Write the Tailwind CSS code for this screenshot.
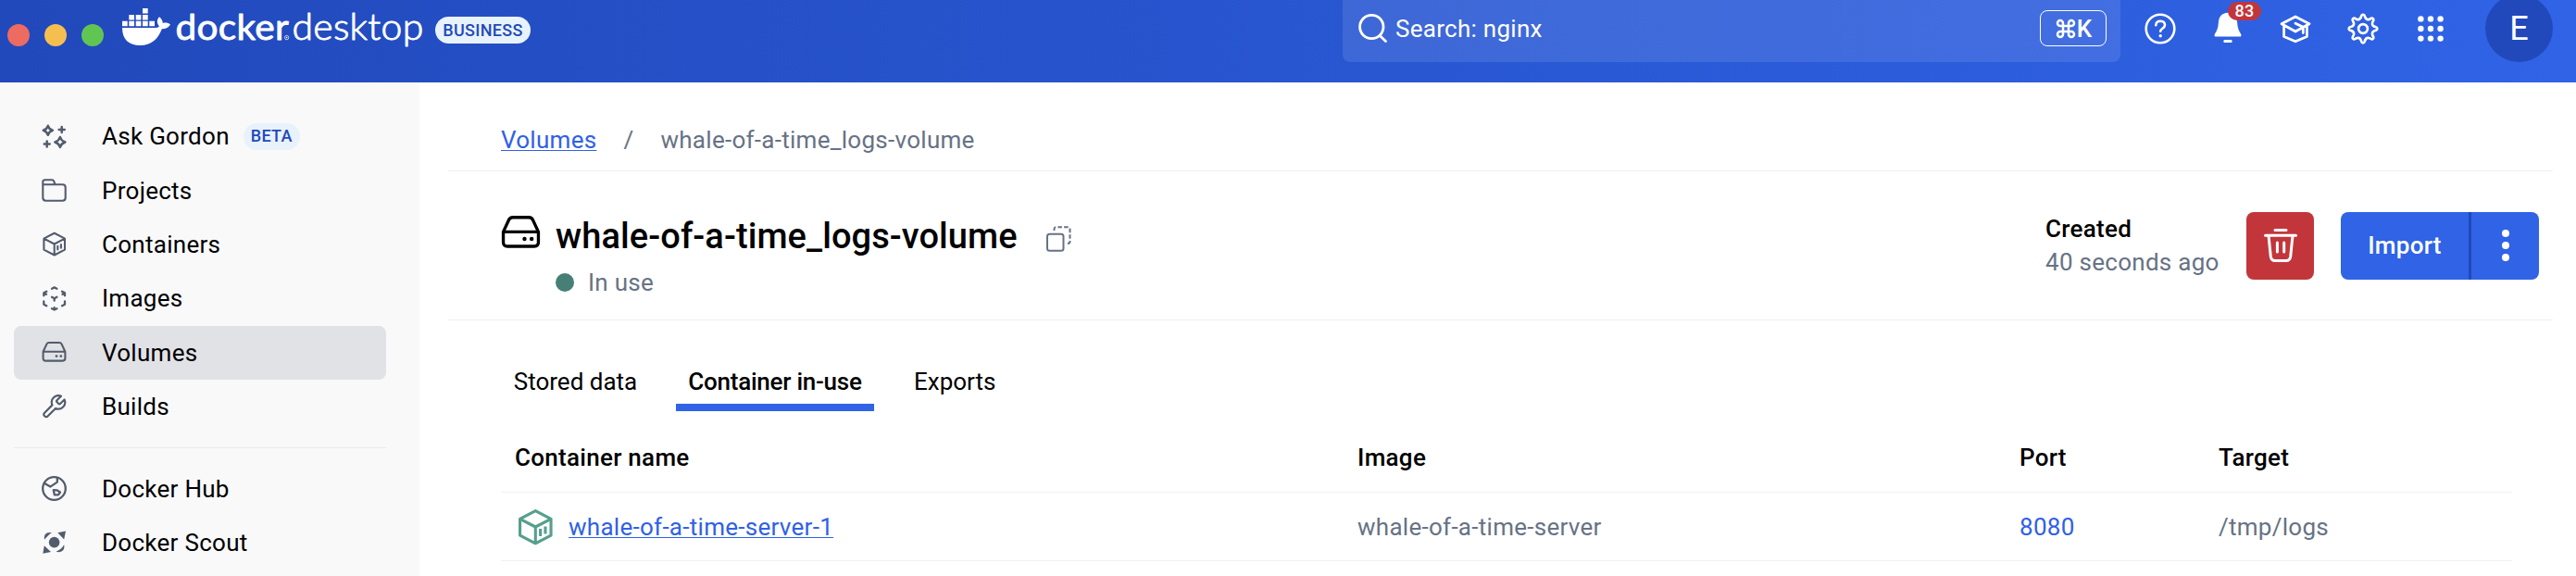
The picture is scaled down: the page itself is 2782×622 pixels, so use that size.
<!DOCTYPE html>
<html lang="en">
<head>
<meta charset="utf-8">
<title>Docker Desktop</title>
<script src="https://cdn.jsdelivr.net/npm/@tailwindcss/browser@4"></script>
</head>
<body class="w-[2782px] h-[622px] overflow-hidden bg-white font-['Roboto',sans-serif] text-[26px] leading-none tracking-[0.28px] text-black">
<svg class="hidden">
  <symbol id="volume" viewBox="0 0 27 27"><g fill="none" stroke="currentColor" stroke-width="2.1" stroke-linejoin="round"><path d="M1.6 12.8 5.4 4.6Q6.1 3 8 3H19Q20.900 3 21.600 4.600L25.400 12.800V19.800Q25.400 22.600 22.600 22.600H4.400Q1.600 22.600 1.600 19.800ZM1.600 12.800H25.400"/></g><circle cx="16" cy="17.600" r="1.400" fill="currentColor"/><circle cx="20.800" cy="17.600" r="1.400" fill="currentColor"/></symbol>
  <symbol id="cube" viewBox="0 0 27 27"><path d="M13.700 1.700 25 7.600V19.600L13.700 25.500 2.400 19.600V7.600ZM2.400 7.600 13.700 13.500 25 7.600M13.700 13.500V25.500M17.300 14.900V20.300M20.900 13.200V18.600" fill="none" stroke="currentColor" stroke-width="2.1" stroke-linejoin="round"/></symbol>
  <path id="tooth" d="M-2.200 -12.400C-1.600 -16.300 1.600 -16.300 2.200 -12.400Q3.670 -8.870 7.210 -10.320"/>
</svg>

<header class="h-[89px] bg-linear-to-r from-[#2149bb] to-[#3063e6]">
  <div class="flex h-[61px] items-center pl-2 text-white">
    <div class="mt-[15px] flex gap-4">
      <span class="size-6 rounded-full bg-[#ed6b60]"></span>
      <span class="size-6 rounded-full bg-[#f5bf4f]"></span>
      <span class="size-6 rounded-full bg-[#61c554]"></span>
    </div>
    <svg class="ml-4 h-[61px] w-[332px] shrink-0" viewBox="128 0 332 61" fill="#fff">
      <path d="M154 9h5.700v5.500H154zM139.300 16h5.700v5.500h-5.700zM146.700 16h5.700v5.500h-5.700zM154 16h5.700v5.500H154zM132 22.700h5.700v5.500H132zM139.300 22.700h5.700v5.500h-5.700zM146.700 22.700h5.700v5.500h-5.700zM154 22.700h5.700v5.500H154zM161.300 22.700h5.700v5.500h-5.700z"/>
      <path d="M132 30H167.500Q170.500 30 172 28.500C168.800 24.500 169.500 21 172 18.300C174.600 20.300 175.700 22.600 175.800 25C178.500 24.200 181.500 24.600 184 26.300C182.400 29.800 179.300 31.200 174.800 31.200C171 42 163 49 151.500 49C139 49 132 42.500 132 30Z"/>
      <text x="189.500" y="43.200" font-family="Lato" font-weight="400" font-size="38.500" stroke="#fff" stroke-width=".8" stroke-linejoin="round" textLength="122.500" lengthAdjust="spacingAndGlyphs">docker</text>
      <circle cx="309.600" cy="40.600" r="2.200" fill="none" stroke="#fff" stroke-width=".7"/><circle cx="309.600" cy="40.600" r=".8"/>
      <text x="315.500" y="43.200" font-family="Lato" font-weight="300" font-size="38.500" stroke="#fff" stroke-width=".9" stroke-linejoin="round" textLength="142" lengthAdjust="spacingAndGlyphs">desktop</text>
    </svg>
    <span class="ml-[10px] mt-1 flex h-[29px] w-[103px] items-center justify-center rounded-full bg-[#e8f2fb] text-[18px] font-medium tracking-[0.3px] text-[#2149bb]">BUSINESS</span>
    <div class="ml-[877px] flex h-[73px] w-[840px] items-center rounded-lg bg-white/10 pl-[15px] pr-[15px]">
      <svg class="size-9" viewBox="0 0 36 36" fill="none" stroke="#fff" stroke-width="2.800" stroke-linecap="round"><circle cx="16.300" cy="16" r="12.700"/><path d="M25.200 25.500 31.500 31.500"/></svg>
      <span class="ml-[6px] grow">Search: nginx</span>
      <span class="flex h-[39px] w-[72px] items-center justify-center rounded-lg border-[1.500px] border-white font-medium"><svg class="size-6" viewBox="0 0 24 24" fill="none" stroke="#fff" stroke-width="2.500"><path d="M15 6v12a3 3 0 1 0 3-3H6a3 3 0 1 0 3 3V6a3 3 0 1 0-3 3h12a3 3 0 1 0-3-3"/></svg>K</span>
    </div>
    <div class="ml-[6px] flex">
      <span class="flex w-[73px] justify-center"><svg class="size-9" viewBox="0 0 36 36" fill="none" stroke="#fff" stroke-width="2.600" stroke-linecap="round"><circle cx="18" cy="18" r="15.300"/><path d="M13.300 14.200Q13.500 9.800 18.200 9.800Q23 10 23 14.300C23 17.500 18.200 18 18.200 20.700"/><circle cx="18.200" cy="25.800" r="1.700" fill="#fff" stroke="none"/></svg></span>
      <span class="relative flex w-[73px] justify-center"><svg class="size-9" viewBox="0 0 36 36" fill="#fff"><path d="M18 .8C11.500 1 8.300 5.500 7.900 11Q7.500 18.500 4.300 23Q2.500 26.500 4.800 26.500H31.200Q33.500 26.500 31.700 23Q28.500 18.500 28.100 11C27.700 5.500 24.500 1 18 .8ZM14.500 30H21.500Q22.700 30 22.700 31.500T21.500 33H14.500Q13.300 33 13.300 31.500T14.500 30Z"/></svg><span class="absolute left-[37px] top-[-11px] flex h-[20px] w-[36px] items-center justify-center rounded-full bg-[#c2363b] text-[18px] font-medium">83</span></span>
      <span class="flex w-[73px] justify-center"><svg class="size-9" viewBox="0 0 36 36" fill="none" stroke="#fff" stroke-width="2.800" stroke-linejoin="round" stroke-linecap="round"><path d="M18 5 33 12.700 18 21 3 12.700ZM5.600 15V26.500L18 31.800 30.400 26.500V15M18 12.300 26.300 16.300V22.500"/></svg></span>
      <span class="flex w-[73px] justify-center"><svg class="size-9" viewBox="-18 -18 36 36" fill="none" stroke="#fff" stroke-width="2.600" stroke-linecap="round" stroke-linejoin="round"><use href="#tooth"/><use href="#tooth" transform="rotate(45)"/><use href="#tooth" transform="rotate(90)"/><use href="#tooth" transform="rotate(135)"/><use href="#tooth" transform="rotate(180)"/><use href="#tooth" transform="rotate(225)"/><use href="#tooth" transform="rotate(270)"/><use href="#tooth" transform="rotate(315)"/><circle r="4.900"/></svg></span>
      <span class="flex w-[73px] justify-center"><svg class="size-9" viewBox="-18 -18 36 36" fill="#fff"><circle cx="-10.600" cy="-10.600" r="3.200"/><circle cy="-10.600" r="3.200"/><circle cx="10.600" cy="-10.600" r="3.200"/><circle cx="-10.600" r="3.200"/><circle r="3.200"/><circle cx="10.600" r="3.200"/><circle cx="-10.600" cy="10.600" r="3.200"/><circle cy="10.600" r="3.200"/><circle cx="10.600" cy="10.600" r="3.200"/></svg></span>
    </div>
    <span class="ml-[23px] flex size-[73px] shrink-0 items-center justify-center rounded-full bg-[#2149bb] text-[36px] tracking-normal">E</span>
  </div>
</header>

<div class="flex h-[533px]">
  <aside class="w-[453px] shrink-0 bg-[#f9f9fa] pl-[15px] pr-9 pt-[29px]">
    <nav class="[&_a]:flex [&_a]:h-[58.400px] [&_a]:items-center [&_a]:gap-[38px] [&_a]:rounded-lg [&_a]:pl-[30px] [&_svg]:size-[27px] [&_svg]:text-[#525c6c]">
      <a><svg viewBox="0 0 27 27" fill="none" stroke="currentColor" stroke-width="2.500" stroke-linejoin="round" stroke-linecap="round"><path d="M6.800 1.800Q8 5.600 11.800 6.800Q8 8 6.800 11.800Q5.600 8 1.800 6.800Q5.600 5.600 6.800 1.800ZM19.900 14Q21.200 18.200 25.400 19.500Q21.200 20.800 19.900 25Q18.600 20.800 14.400 19.500Q18.600 18.200 19.900 14ZM21.700 2.900V8.900M18.700 5.900H24.700M5.700 18.500V24.500M2.700 21.500H8.700"/></svg><span>Ask Gordon</span><span class="-ml-[23px] flex h-[29px] w-[61px] items-center justify-center rounded-full bg-[#e8f2fb] text-[18px] font-medium text-[#2149bb]">BETA</span></a>
      <a><svg viewBox="0 0 27 27" fill="none" stroke="currentColor" stroke-width="2.100" stroke-linejoin="round"><path d="M1.300 7.500V4.500Q1.300 2.300 3.500 2.300H11.200Q12.600 2.300 13.200 3.700L14.400 7.200M1.300 7.200H22.500Q25.700 7.200 25.700 10.400V21.500Q25.700 24.700 22.500 24.700H4.500Q1.300 24.700 1.300 21.500Z"/></svg><span>Projects</span></a>
      <a><svg><use href="#cube"/></svg><span>Containers</span></a>
      <a><svg viewBox="0 0 27 27" fill="none" stroke="currentColor" stroke-width="2.300" stroke-linejoin="round" stroke-linecap="round"><path d="M11 2.700 13.700 1.400 16.400 2.700M2.300 10.300V7.300L5.300 5.700M2.600 7.600 5 8.700M25 10.300V7.300L22 5.700M24.700 7.600 22.400 8.700M11 11.800 13.700 13.200 16.400 11.800M13.700 13.200V15.700M2.300 16.500V19.700L5.300 21.300M25 16.500V19.700L22 21.300M11 24.200 13.700 25.600 16.400 24.200M13.700 25.600V23.200"/></svg><span>Images</span></a>
      <a class="bg-[#e1e2e6]"><svg><use href="#volume"/></svg><span>Volumes</span></a>
      <a><svg viewBox="1 1 22.500 22.500" fill="none" stroke="currentColor" stroke-width="1.800" stroke-linejoin="round"><path d="M14.700 6.300a1 1 0 0 0 0 1.400l1.600 1.600a1 1 0 0 0 1.400 0l3.770-3.770a6 6 0 0 1-7.940 7.940l-6.910 6.910a2.120 2.120 0 0 1-3-3l6.910-6.910a6 6 0 0 1 7.940-7.940l-3.760 3.760z"/></svg><span>Builds</span></a>
      <hr class="my-[14.500px] h-px border-0 bg-[#e9eaed]">
      <a><svg viewBox="0 0 27 27" fill="none" stroke="currentColor" stroke-width="2.300" stroke-linejoin="round"><circle cx="13.500" cy="13.500" r="12.300"/><path d="M16.800 1.700V6.600L9.300 11.600 2.300 7.500M12.800 15.200 16.300 15.300 20 17.500 18 20.300H13.800Z"/></svg><span>Docker Hub</span></a>
      <a><svg viewBox="0 0 27 27" fill="currentColor"><circle cx="13.600" cy="13.600" r="5.800"/><path d="M26 1.500 17.300 3.200 24.200 10.500ZM1.300 25.800 2.800 17.200 10 24ZM3.100 10.800C2 5 5 2 10.800 3.100C7.800 5.500 5.500 7.800 3.100 10.800ZM24.200 16.300C25.300 22 22 25.200 15.500 23.800C19.500 22 22 19.800 24.200 16.300Z"/></svg><span>Docker Scout</span></a>
    </nav>
  </aside>

  <main class="grow pl-[31px] pr-[25px]">
    <div class="flex h-24 items-end border-b border-[#eeeff1] pb-[13px] pl-[57px] text-[#677285]">
      <a class="flex h-10 items-center text-[#2f61e6] underline decoration-1 underline-offset-[2px]">Volumes</a>
      <span class="ml-[29px] flex h-10 items-center">/</span>
      <span class="ml-[29px] flex h-10 items-center">whale-of-a-time_logs-volume</span>
    </div>

    <div class="flex h-[161px] border-b border-[#eeeff1] pl-[57px] pr-[15px]">
      <svg class="mt-[45px] size-[43px]"><use href="#volume"/></svg>
      <div class="ml-4 pt-[44px]">
        <div class="flex h-[52px] items-center">
          <h1 class="text-[38px] font-medium tracking-[0.080px]">whale-of-a-time_logs-volume</h1>
          <svg class="ml-[31px] mt-[6px] h-[28px] w-[27px] text-[#677285]" viewBox="0 0 27 28" fill="none" stroke="currentColor" stroke-width="2"><rect x="1" y="8.700" width="17.500" height="18" rx="2.500"/><path d="M8.500 5V3.500Q8.500 1.300 10.700 1.300H23Q25.500 1.300 25.500 3.800V16.500Q25.500 19 23 19H21.500" stroke-dasharray="4.500 2.200"/></svg>
        </div>
        <div class="mt-0.5 flex h-11 items-center gap-[15px] text-[#677285]"><span class="size-[20px] rounded-full bg-[#467f75]"></span><span>In use</span></div>
      </div>
      <div class="ml-auto flex items-center">
        <div class="w-[217px] leading-[36px]"><div class="font-medium">Created</div><div class="whitespace-nowrap text-[#677285]">40 seconds ago</div></div>
        <button class="flex h-[73px] w-[73px] items-center justify-center rounded-lg bg-[#c2363b]"><svg class="h-[38px] w-9" viewBox="0 0 36 38" fill="none" stroke="#fff" stroke-width="3" stroke-linejoin="round" stroke-linecap="round"><path d="M12 2.500H24M1.500 8.300H34.500M5 8.500 7.300 31Q8 35.500 12 35.500H24Q28 35.500 28.700 31L31 8.500"/><path d="M14.400 16V26M21.700 16V26"/></svg></button>
        <div class="ml-[29px] flex h-[73px] w-[214px] overflow-hidden rounded-lg bg-[#3063e6] text-white">
          <button class="flex w-[138px] items-center justify-center font-medium">Import</button>
          <span class="w-[3px] bg-[#2149bb]"></span>
          <button class="flex grow flex-col items-center justify-center gap-[5px]"><i class="size-2 rounded-full bg-white"></i><i class="size-2 rounded-full bg-white"></i><i class="size-2 rounded-full bg-white"></i></button>
        </div>
      </div>
    </div>

    <div class="pl-[57px] pr-11">
      <nav class="mt-[34px] flex h-16 gap-7 tracking-[0px]">
        <a class="flex w-[161px] items-center justify-center">Stored data</a>
        <a class="flex w-[214px] items-center justify-center border-b-8 border-[#3063e6] pt-2 font-medium tracking-[-0.250px]">Container in-use</a>
        <a class="flex items-center pl-[15px]">Exports</a>
      </nav>
      <div class="mt-[13px] grid h-[75px] grid-cols-[910px_715px_215px_1fr] items-center border-b border-[#f0f1f3] pl-[15px] font-medium">
        <span>Container name</span><span>Image</span><span>Port</span><span>Target</span>
      </div>
      <div class="grid h-[74px] grid-cols-[910px_715px_215px_1fr] items-center border-b border-[#f0f1f3] pl-[15px] text-[#677285]">
        <span class="flex items-center gap-4"><svg class="ml-[2px] size-10 text-[#569f8d]"><use href="#cube"/></svg><a class="text-[#2f61e6] underline decoration-1 underline-offset-[2px]">whale-of-a-time-server-1</a></span>
        <span>whale-of-a-time-server</span>
        <span class="text-[#2f61e6]">8080</span>
        <span>/tmp/logs</span>
      </div>
    </div>
  </main>
</div>
</body>
</html>
